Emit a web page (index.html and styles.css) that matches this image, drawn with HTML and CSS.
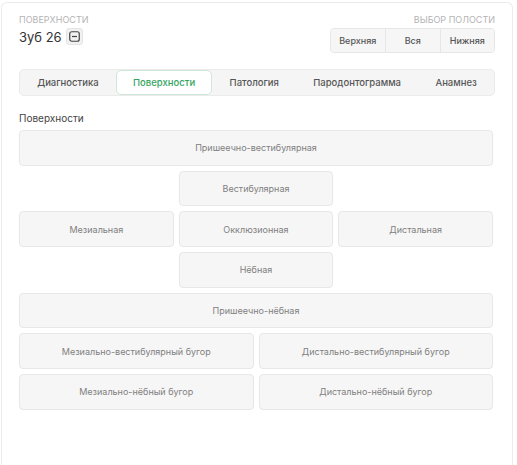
FILE: index.html
```html
<!DOCTYPE html>
<html lang="ru">
<head>
    <meta charset="UTF-8">
    <title>Зуб 26</title>
    <link rel="stylesheet" href="styles.css">
</head>
<body>
    <div class="card">
        <div class="head">
            <div>
                <div class="caption">Поверхности</div>
                <div class="tooth">
                    <span>Зуб 26</span>
                    <button class="icon-btn" type="button">
                        <svg width="11" height="11" viewBox="0 0 11 11">
                            <rect x="0.75" y="0.75" width="9.5" height="9.5" rx="2" fill="none" stroke="#444" stroke-width="1.2"/>
                            <line x1="3" y1="5.5" x2="8" y2="5.5" stroke="#444" stroke-width="1.2"/>
                        </svg>
                    </button>
                </div>
            </div>
            <div class="jaw">
                <div class="caption">Выбор полости</div>
                <div class="segments">
                    <button type="button">Верхняя</button>
                    <button type="button">Вся</button>
                    <button type="button">Нижняя</button>
                </div>
            </div>
        </div>

        <div class="tabs">
            <div class="tab">Диагностика</div>
            <div class="tab active">Поверхности</div>
            <div class="tab">Патология</div>
            <div class="tab">Пародонтограмма</div>
            <div class="tab">Анамнез</div>
        </div>

        <div class="section-title">Поверхности</div>
        <div class="surfaces">
            <div class="surface full">Пришеечно-вестибулярная</div>
            <div class="surface mid">Вестибулярная</div>
            <div class="surface third first">Мезиальная</div>
            <div class="surface third">Окклюзионная</div>
            <div class="surface third">Дистальная</div>
            <div class="surface mid">Нёбная</div>
            <div class="surface full">Пришеечно-нёбная</div>
            <div class="surface half">Мезиально-вестибулярный бугор</div>
            <div class="surface half">Дистально-вестибулярный бугор</div>
            <div class="surface half">Мезиально-нёбный бугор</div>
            <div class="surface half">Дистально-нёбный бугор</div>
        </div>
    </div>
</body>
</html>
```

FILE: styles.css
```css
body {
    margin: 0;
    background: #fff;
    font-family: Inter, "Open Sans", sans-serif;
    color: #333;
}
.card {
    margin: 2px 0 0 1px;
    width: 476px;
    height: 470px;
    padding: 11px 17px 0 17px;
    border: 1px solid #ececec;
    border-bottom: none;
    border-radius: 6px 6px 0 0;
}
.head {
    display: flex;
    justify-content: space-between;
    align-items: flex-start;
}
.caption {
    font-size: 9px;
    text-transform: uppercase;
    color: #b4b4b4;
    line-height: 12px;
}
.tooth {
    display: flex;
    align-items: center;
    gap: 4px;
    margin-top: 2px;
    font-size: 13px;
    color: #333;
}
.icon-btn {
    width: 17px;
    height: 17px;
    padding: 0;
    display: flex;
    align-items: center;
    justify-content: center;
    background: #f1f1f1;
    border: 1px solid #e4e4e4;
    border-radius: 3px;
}
.jaw {
    display: flex;
    flex-direction: column;
    align-items: flex-end;
}
.segments {
    display: flex;
    margin-top: 2px;
    border: 1px solid #e6e6e6;
    border-radius: 4px;
    background: #f6f6f6;
    overflow: hidden;
}
.segments button {
    width: 54.5px;
    height: 23px;
    padding: 0;
    border: none;
    border-left: 1px solid #e6e6e6;
    background: #f6f6f6;
    font-family: inherit;
    font-size: 9px;
    font-weight: 500;
    color: #555;
}
.segments button:first-child {
    border-left: none;
}
.tabs {
    display: flex;
    margin-top: 16px;
    height: 25px;
    background: #f5f5f5;
    border: 1px solid #ebebeb;
    border-radius: 5px;
}
.tab {
    flex: 1 1 auto;
    padding: 0 10px;
    display: flex;
    align-items: center;
    justify-content: center;
    font-size: 9.5px;
    font-weight: 500;
    color: #555;
    border: 1px solid transparent;
    border-radius: 5px;
}
.tab.active {
    background: #fff;
    border-color: #cde8d6;
    color: #35a55f;
}
.section-title {
    margin-top: 16px;
    font-size: 10px;
    color: #444;
}
.surfaces {
    display: grid;
    grid-template-columns: repeat(6, 1fr);
    grid-auto-rows: 35.7px;
    gap: 5px;
    margin: 6px 2px 0 0;
}
.surface {
    display: flex;
    align-items: center;
    justify-content: center;
    background: #f6f6f6;
    border: 1px solid #e7e7ea;
    border-radius: 4px;
    font-size: 9px;
    color: #808080;
}
.full {
    grid-column: span 6;
}
.mid {
    grid-column: 3 / span 2;
}
.third {
    grid-column: span 2;
}
.third.first {
    grid-column: 1 / span 2;
}
.half {
    grid-column: span 3;
}
```
